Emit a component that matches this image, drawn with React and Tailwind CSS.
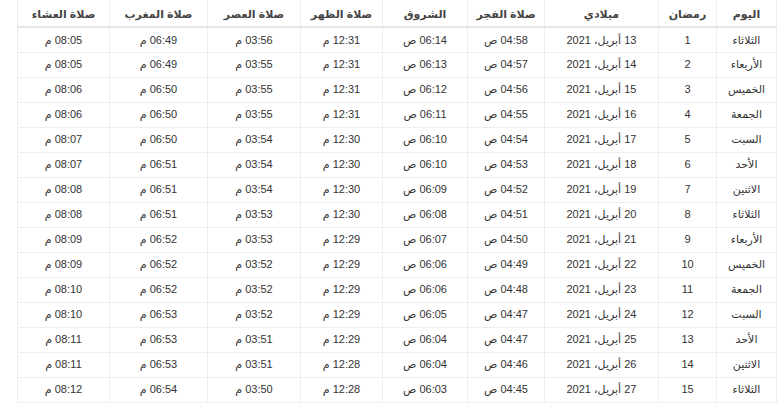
import React from 'react';

const days = ['الثلاثاء', 'الأربعاء', 'الخميس', 'الجمعة', 'السبت', 'الأحد', 'الاثنين', 'الثلاثاء', 'الأربعاء', 'الخميس', 'الجمعة', 'السبت', 'الأحد', 'الاثنين', 'الثلاثاء'];
const fajr = ['04:58', '04:57', '04:56', '04:55', '04:54', '04:53', '04:52', '04:51', '04:50', '04:49', '04:48', '04:47', '04:47', '04:46', '04:45'];
const sunrise = ['06:14', '06:13', '06:12', '06:11', '06:10', '06:10', '06:09', '06:08', '06:07', '06:06', '06:06', '06:05', '06:04', '06:04', '06:03'];
const dhuhr = ['12:31', '12:31', '12:31', '12:31', '12:30', '12:30', '12:30', '12:30', '12:29', '12:29', '12:29', '12:29', '12:29', '12:28', '12:28'];
const asr = ['03:56', '03:55', '03:55', '03:55', '03:54', '03:54', '03:54', '03:53', '03:53', '03:52', '03:52', '03:52', '03:51', '03:51', '03:50'];
const maghrib = ['06:49', '06:49', '06:50', '06:50', '06:50', '06:51', '06:51', '06:51', '06:52', '06:52', '06:52', '06:53', '06:53', '06:53', '06:54'];
const isha = ['08:05', '08:05', '08:06', '08:06', '08:07', '08:07', '08:08', '08:08', '08:09', '08:09', '08:10', '08:10', '08:11', '08:11', '08:12'];

const rows = days.map((day, i) => ({
  day,
  ramadan: i + 1,
  date: `${13 + i} أبريل، 2021`,
  fajr: `${fajr[i]} ص`,
  sunrise: `${sunrise[i]} ص`,
  dhuhr: `${dhuhr[i]} م`,
  asr: `${asr[i]} م`,
  maghrib: `${maghrib[i]} م`,
  isha: `${isha[i]} م`,
}));

const headers = [
  { label: 'اليوم', w: 'w-[60px]' },
  { label: 'رمضان', w: 'w-[58px]' },
  { label: 'ميلادي', w: 'w-[114px]' },
  { label: 'صلاة الفجر', w: 'w-[77px]' },
  { label: 'الشروق', w: 'w-[85px]' },
  { label: 'صلاة الظهر', w: 'w-[82px]' },
  { label: 'صلاة العصر', w: 'w-[93px]' },
  { label: 'صلاة المغرب', w: 'w-[98px]' },
  { label: 'صلاة العشاء', w: 'w-[92px]' },
];

export default function App() {
  return (
    <div className="bg-white w-[782px] h-[414px] overflow-hidden pl-[17px] pr-[6px] font-['Liberation_Sans','DejaVu_Sans',sans-serif]">
      <table dir="rtl" className="w-[759px] table-fixed border-collapse text-[11px] text-[#333]">
        <thead>
          <tr className="h-[27px] border-b-2 border-[#e6e6e6]">
            {headers.map((h, i) => (
              <th
                key={i}
                className={`${h.w} font-semibold text-[#444] text-center border-l border-r border-[#eeeeee] pt-[2px]`}
              >
                {h.label}
              </th>
            ))}
          </tr>
        </thead>
        <tbody>
          {rows.map((r, i) => (
            <tr key={i} className="h-[25px] border-b border-[#eeeeee]">
              <td className="text-center border-l border-r border-[#eeeeee]">{r.day}</td>
              <td className="text-center border-l border-[#eeeeee]">{r.ramadan}</td>
              <td className="text-center border-l border-[#eeeeee]">{r.date}</td>
              <td className="text-center border-l border-[#eeeeee]">{r.fajr}</td>
              <td className="text-center border-l border-[#eeeeee]">{r.sunrise}</td>
              <td className="text-center border-l border-[#eeeeee]">{r.dhuhr}</td>
              <td className="text-center border-l border-[#eeeeee]">{r.asr}</td>
              <td className="text-center border-l border-[#eeeeee]">{r.maghrib}</td>
              <td className="text-center border-l border-[#eeeeee]">{r.isha}</td>
            </tr>
          ))}
        </tbody>
      </table>
    </div>
  );
}
